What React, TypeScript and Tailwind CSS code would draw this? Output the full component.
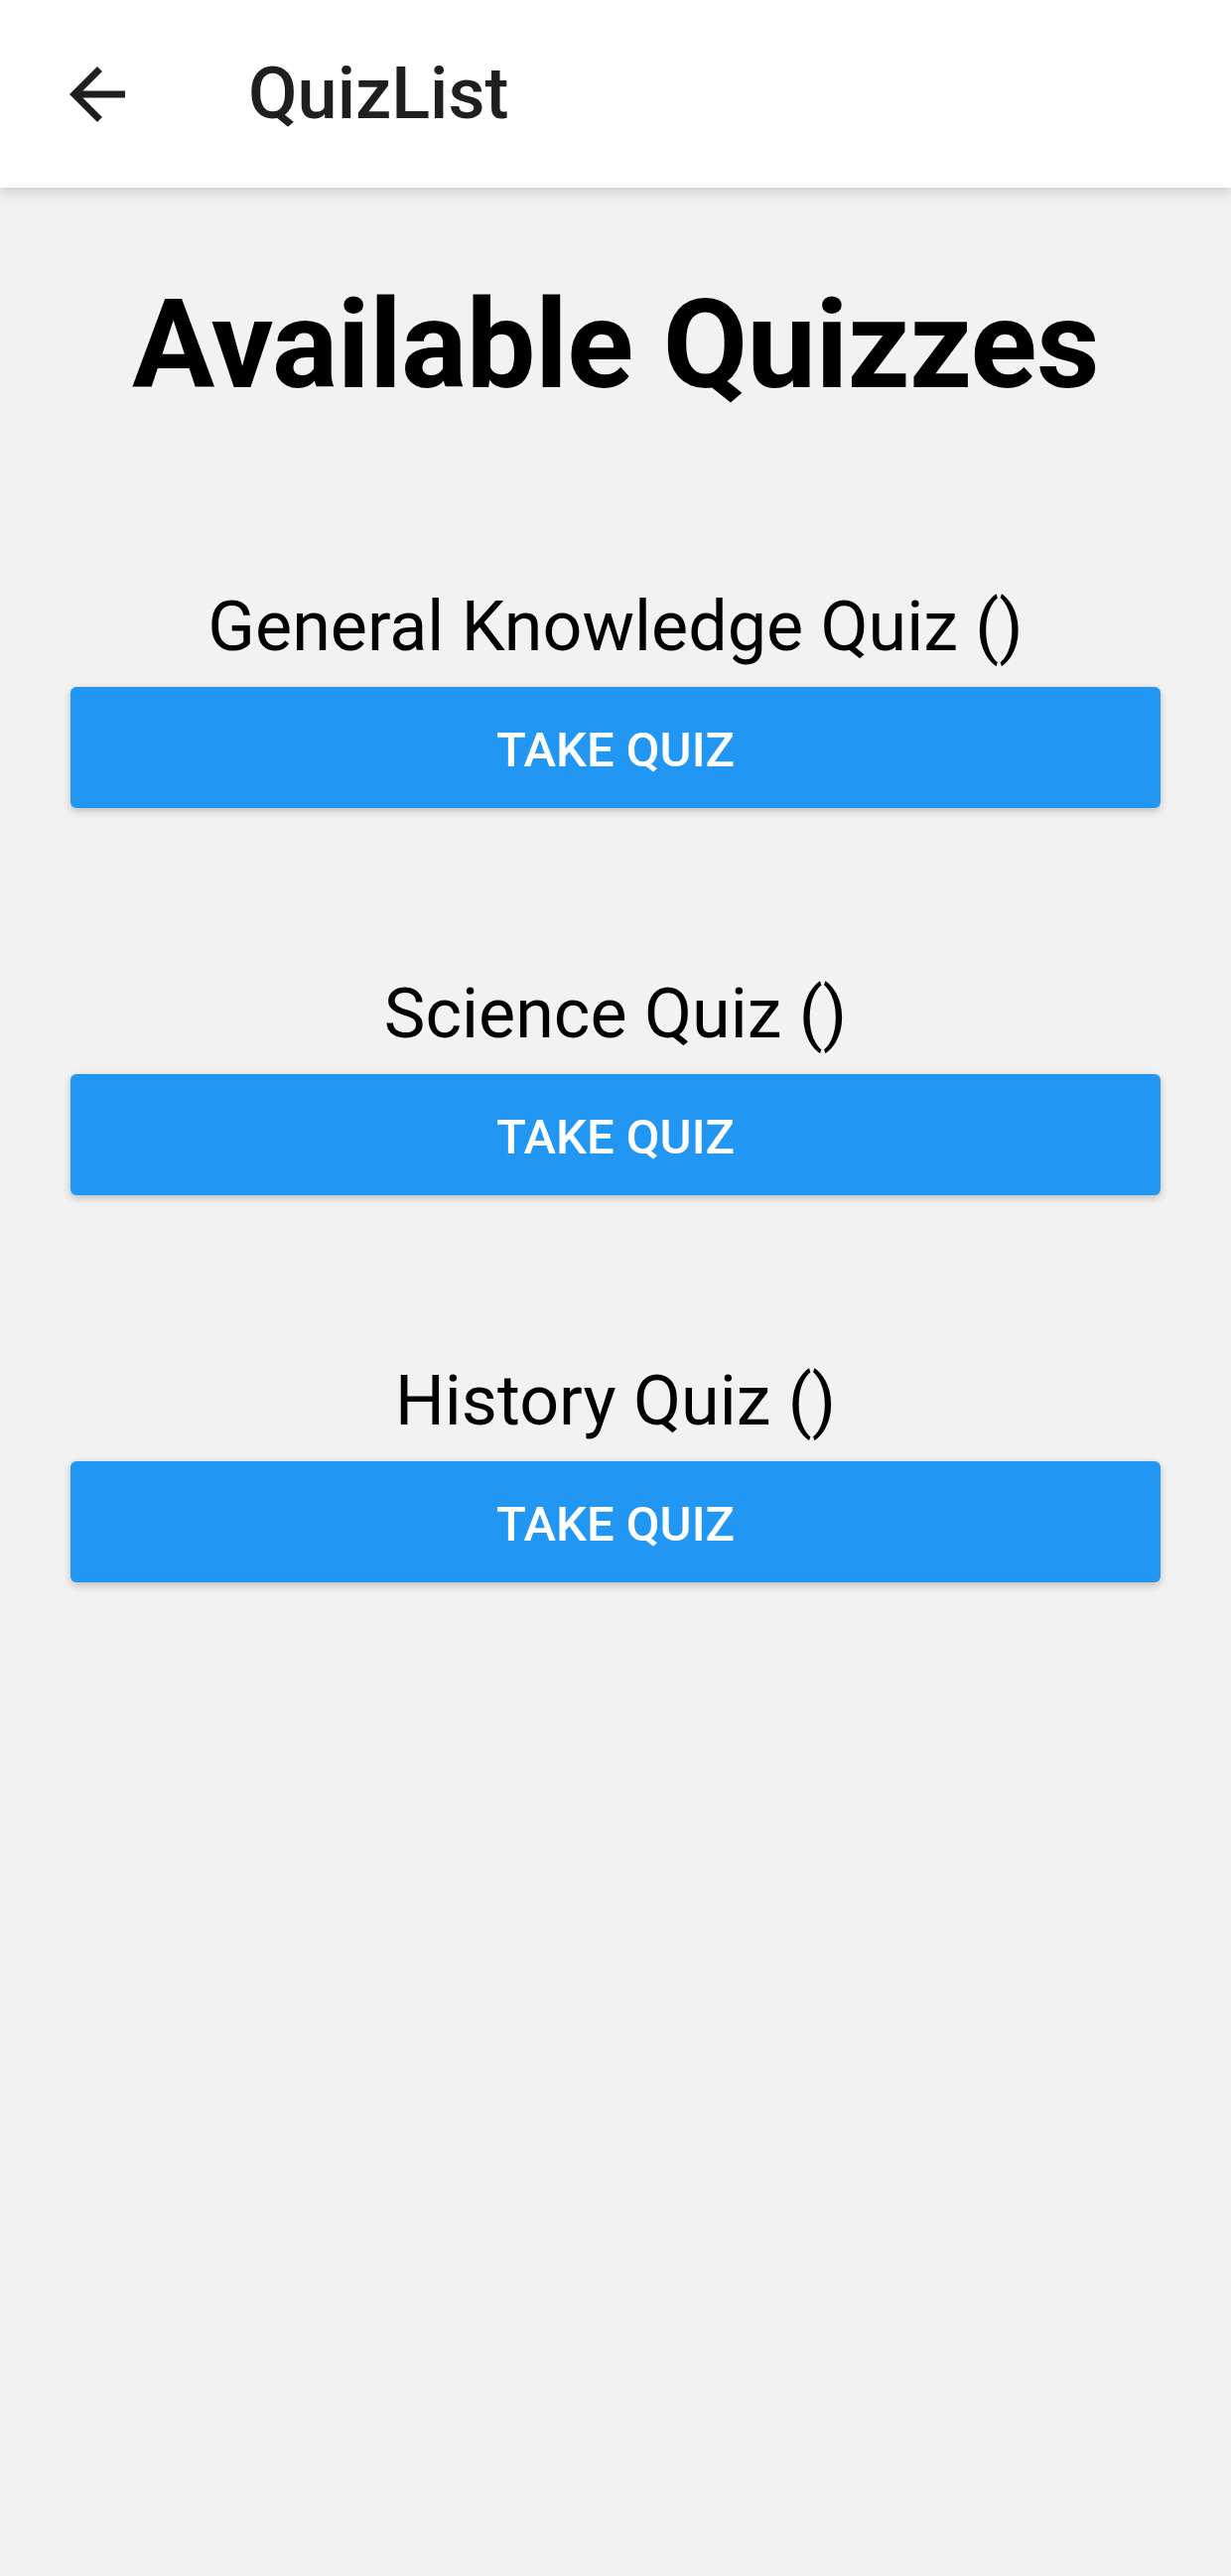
import React from 'react';

const quizzes = [
  { id: 1, title: 'General Knowledge Quiz ()' },
  { id: 2, title: 'Science Quiz ()' },
  { id: 3, title: 'History Quiz ()' },
];

const BackArrow = () => (
  <svg viewBox="0 0 24 24" className="w-[84px] h-[84px]" fill="#1f1f1f">
    <path d="M20 11H7.83l5.59-5.59L12 4l-8 8 8 8 1.41-1.41L7.83 13H20v-2z" />
  </svg>
);

const App = () => {
  return (
    <div className="min-h-[2595px] bg-[#f2f2f2] font-['Roboto',sans-serif]">
      <header className="relative z-10 h-[189px] bg-white flex items-center shadow-[0_4px_14px_rgba(0,0,0,0.18)]">
        <button className="ml-[56px] flex items-center justify-center">
          <BackArrow />
        </button>
        <h1 className="ml-[110px] text-[72px] leading-none font-medium text-[#1f1f1f]">QuizList</h1>
      </header>

      <main className="flex flex-col items-center">
        <h2 className="mt-[97px] text-[124px] leading-none font-bold text-black tracking-[-0.005em]">
          Available Quizzes
        </h2>

        <div className="w-full mt-[14px]">
          {quizzes.map((quiz) => (
            <div key={quiz.id} className="mt-[172px] flex flex-col items-center">
              <p className="text-[70px] leading-none text-black">{quiz.title}</p>
              <button className="mt-[26px] w-[calc(100%-142px)] h-[122px] pt-[5px] rounded-[6px] bg-[#2196f3] text-white text-[49px] font-medium shadow-[0_3px_8px_rgba(0,0,0,0.22)]">
                TAKE QUIZ
              </button>
            </div>
          ))}
        </div>
      </main>
    </div>
  );
};

export default App;
